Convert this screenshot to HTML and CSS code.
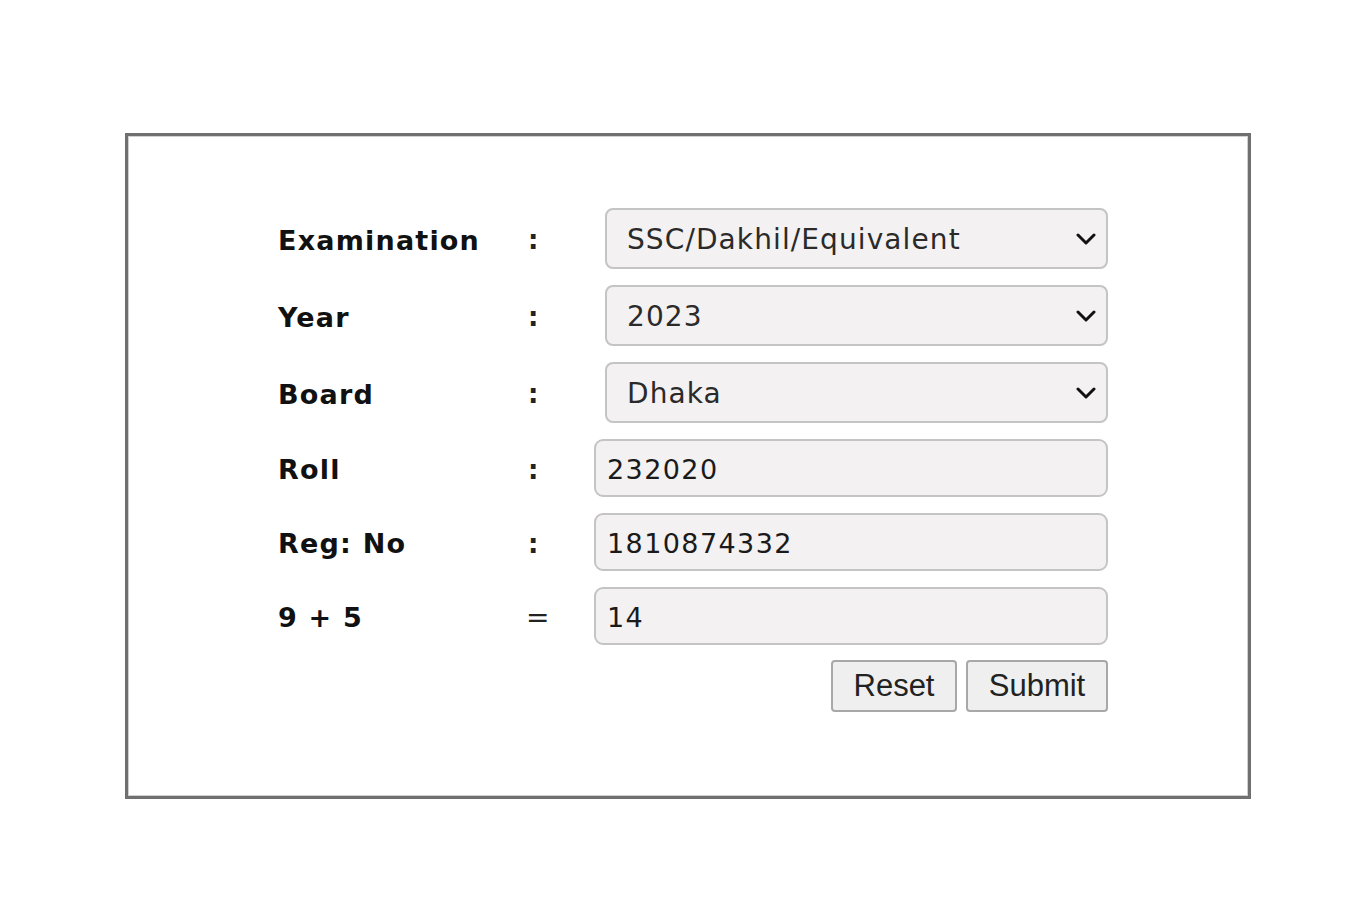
FILE: index.html
```html
<!DOCTYPE html>
<html>
<head>
<meta charset="utf-8">
<link rel="stylesheet" href="styles.css">
</head>
<body>
<div class="page">
  <div class="box">
    <form class="form">
      <div class="label">Examination</div>
      <div class="sep">:</div>
      <div class="ctrl select-wrap">
        <select class="select"><option>SSC/Dakhil/Equivalent</option></select>
        <svg class="chev" width="20" height="12" viewBox="0 0 20 12"><polyline points="2,2 10,10 18,2" fill="none" stroke="#111" stroke-width="3" stroke-linecap="round" stroke-linejoin="round"/></svg>
      </div>

      <div class="label">Year</div>
      <div class="sep">:</div>
      <div class="ctrl select-wrap">
        <select class="select"><option>2023</option></select>
        <svg class="chev" width="20" height="12" viewBox="0 0 20 12"><polyline points="2,2 10,10 18,2" fill="none" stroke="#111" stroke-width="3" stroke-linecap="round" stroke-linejoin="round"/></svg>
      </div>

      <div class="label">Board</div>
      <div class="sep">:</div>
      <div class="ctrl select-wrap">
        <select class="select"><option>Dhaka</option></select>
        <svg class="chev" width="20" height="12" viewBox="0 0 20 12"><polyline points="2,2 10,10 18,2" fill="none" stroke="#111" stroke-width="3" stroke-linecap="round" stroke-linejoin="round"/></svg>
      </div>

      <div class="label">Roll</div>
      <div class="sep">:</div>
      <div class="ctrl"><input class="input" type="text" value="232020"></div>

      <div class="label">Reg: No</div>
      <div class="sep">:</div>
      <div class="ctrl"><input class="input" type="text" value="1810874332"></div>

      <div class="label">9 + 5</div>
      <div class="sep eq">=</div>
      <div class="ctrl"><input class="input" type="text" value="14"></div>

      <div class="buttons">
        <button type="button" class="btn btn-reset">Reset</button>
        <button type="button" class="btn btn-submit">Submit</button>
      </div>
    </form>
  </div>
</div>
</body>
</html>
```

FILE: styles.css
```css
html, body {
  margin: 0;
  padding: 0;
  background: #ffffff;
}

.page {
  padding-top: 133px;
  padding-left: 125px;
}

.box {
  box-sizing: border-box;
  width: 1126px;
  height: 666px;
  border: 3px solid #707070;
  box-shadow: inset 0 0 0 1px #d0d0d0;
  padding-top: 72px;
  padding-left: 150px;
}

.form {
  display: grid;
  grid-template-columns: 250px 66px 514px;
  row-gap: 16px;
  align-items: center;
}

.label {
  font-family: "DejaVu Sans", Verdana, sans-serif;
  font-weight: bold;
  font-size: 27px;
  letter-spacing: 1.2px;
  color: #111;
  padding-top: 3px;
}

.sep {
  font-family: "DejaVu Sans", Verdana, sans-serif;
  font-weight: bold;
  font-size: 26px;
  color: #222;
  padding-top: 3px;
}

.sep.eq {
  font-weight: normal;
  font-size: 28px;
  margin-left: -2px;
}

.ctrl {
  display: flex;
}

.select-wrap {
  position: relative;
}

.select {
  -webkit-appearance: none;
  appearance: none;
  box-sizing: border-box;
  margin: 0 0 0 11px;
  width: 503px;
  height: 61px;
  padding: 2px 0 0 20px;
  border: 2px solid #c4c4c4;
  border-radius: 8px;
  background: #f3f1f1;
  font-family: "DejaVu Sans", Verdana, sans-serif;
  font-size: 28px;
  letter-spacing: 1.1px;
  color: #2a2a2a;
  outline: none;
}

.chev {
  position: absolute;
  right: 12px;
  top: 25px;
}

.input {
  box-sizing: border-box;
  margin: 0;
  width: 514px;
  height: 58px;
  padding: 2px 0 0 11px;
  border: 2px solid #c4c4c4;
  border-radius: 9px;
  background: #f3f1f1;
  font-family: "DejaVu Sans", Verdana, sans-serif;
  font-size: 27px;
  letter-spacing: 1.4px;
  color: #1a1a1a;
  outline: none;
}

.buttons {
  grid-column: 3;
  display: flex;
  justify-content: flex-end;
  gap: 9px;
  margin-top: -1px;
}

.btn {
  box-sizing: border-box;
  height: 52px;
  margin: 0;
  padding: 0;
  border: 2px solid #a8a8a8;
  border-radius: 4px;
  background: #efefef;
  font-family: "Liberation Sans", Arial, sans-serif;
  font-size: 31px;
  color: #222;
}

.btn-reset {
  width: 126px;
}

.btn-submit {
  width: 142px;
}
```
